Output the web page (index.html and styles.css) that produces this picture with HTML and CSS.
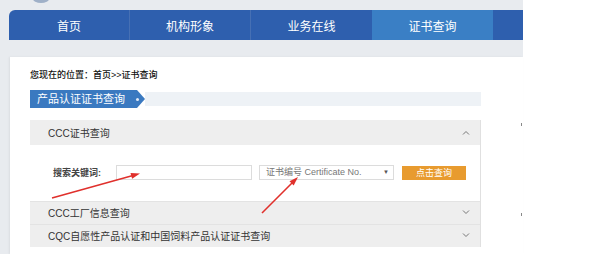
FILE: index.html
```html
<!DOCTYPE html>
<html lang="zh-CN">
<head>
<meta charset="utf-8">
<title>证书查询</title>
<link rel="stylesheet" href="styles.css">
</head>
<body>
<div class="page">
  <div class="top"><span class="logo"></span></div>
  <nav class="nav">
    <a class="nav-item">首页</a>
    <a class="nav-item">机构形象</a>
    <a class="nav-item">业务在线</a>
    <a class="nav-item active">证书查询</a>
    <span class="nav-rest"></span>
  </nav>
  <main class="panel">
    <div class="crumb">您现在的位置：首页&gt;&gt;证书查询</div>
    <div class="title-row">
      <div class="tag">产品认证证书查询<span class="dot"></span></div>
      <div class="title-bar"></div>
    </div>
    <div class="acc">
      <div class="acc-head">
        <span>CCC证书查询</span>
        <svg class="chev" width="8" height="5" viewBox="0 0 8 5"><polyline points="1,4.5 4,1.5 7,4.5" fill="none" stroke="#777" stroke-width="1"/></svg>
      </div>
      <div class="acc-body">
        <span class="label">搜索关键词:</span>
        <span class="input"></span>
        <span class="select">证书编号 Certificate No.<span class="caret">▼</span></span>
        <span class="btn">点击查询</span>
      </div>
      <div class="acc-head">
        <span>CCC工厂信息查询</span>
        <svg class="chev" width="8" height="5" viewBox="0 0 8 5"><polyline points="1,0.5 4,3.5 7,0.5" fill="none" stroke="#777" stroke-width="1"/></svg>
      </div>
      <div class="acc-head">
        <span>CQC自愿性产品认证和中国饲料产品认证证书查询</span>
        <svg class="chev" width="8" height="5" viewBox="0 0 8 5"><polyline points="1,0.5 4,3.5 7,0.5" fill="none" stroke="#777" stroke-width="1"/></svg>
      </div>
    </div>
  </main>
  <span class="mark mark-a"></span>
  <span class="mark mark-b"></span>
</div>
<svg class="arrows" width="600" height="254" viewBox="0 0 600 254">
  <line x1="52" y1="198" x2="132" y2="175.8" stroke="#e0302c" stroke-width="1.6"/>
  <polygon points="140,173.5 132.1,178.8 130.5,173.0" fill="#e0302c"/>
  <line x1="262" y1="213" x2="292" y2="183" stroke="#e0302c" stroke-width="1.6"/>
  <polygon points="298,177 293.7,185.5 289.5,181.3" fill="#e0302c"/>
</svg>
</body>
</html>
```

FILE: styles.css
```css
html, body {
  margin: 0;
  padding: 0;
  background: #ffffff;
}
body {
  position: relative;
  width: 600px;
  height: 254px;
  overflow: hidden;
  font-family: "Liberation Sans", "Noto Sans CJK SC", sans-serif;
}
.page {
  position: relative;
  width: 523px;
  height: 254px;
  background: #e8ebef;
}
.top {
  height: 10px;
  position: relative;
}
.logo {
  position: absolute;
  left: 33px;
  top: -5px;
  width: 16px;
  height: 8px;
  border-radius: 50%;
  background: #9fb0c8;
}
.nav {
  display: flex;
  margin-left: 9px;
  height: 30px;
  background: #2e5fae;
  border-top-left-radius: 6px;
}
.nav-item {
  width: 121px;
  flex: none;
  display: flex;
  align-items: center;
  justify-content: center;
  color: #ffffff;
  font-size: 12px;
  border-right: 1px solid #4670b4;
  box-sizing: border-box;
}
.nav-item:nth-child(3) {
  border-right: none;
}
.nav-item.active {
  background: #3a7fc5;
  border-right: none;
}
.nav-rest {
  flex: 1;
}
.panel {
  margin: 17px 0 0 10px;
  background: #ffffff;
  height: 197px;
  box-sizing: border-box;
  padding: 13px 42px 0 20px;
  box-shadow: -1px 0 2px rgba(0,0,0,0.06);
}
.crumb {
  font-size: 9px;
  line-height: 11px;
  color: #111;
  font-weight: 500;
}
.title-row {
  display: flex;
  align-items: center;
  margin-top: 9px;
  height: 18px;
}
.tag {
  position: relative;
  width: 115px;
  height: 18px;
  flex: none;
  background: #3a79c0;
  color: #ffffff;
  font-size: 11px;
  line-height: 18px;
  padding-left: 7px;
  box-sizing: border-box;
  clip-path: polygon(0 0, 107px 0, 115px 50%, 107px 100%, 0 100%);
}
.dot {
  position: absolute;
  left: 106px;
  top: 8px;
  width: 3px;
  height: 3px;
  border-radius: 50%;
  background: #dfe9f5;
}
.title-bar {
  flex: 1;
  height: 14px;
  background: #eef2f6;
}
.acc {
  margin-top: 12px;
  border-right: 1px solid #e0e0e0;
}
.acc-head {
  display: flex;
  align-items: center;
  justify-content: space-between;
  height: 23px;
  padding: 0 10px 1px 18px;
  box-sizing: border-box;
  background: #eeeeee;
  color: #333;
  font-size: 10px;
  border-top: 1px solid #e3e3e3;
}
.acc-head:first-child {
  height: 25px;
  border-top: none;
}
.acc-body {
  display: flex;
  align-items: center;
  height: 56px;
  padding: 0 0 1px 23px;
  box-sizing: border-box;
  background: #ffffff;
}
.label {
  width: 63px;
  flex: none;
  font-size: 9px;
  font-weight: bold;
  color: #444;
}
.input {
  width: 136px;
  height: 15px;
  border: 1px solid #dcdcdc;
  box-sizing: border-box;
  flex: none;
}
.select {
  position: relative;
  margin-left: 7px;
  width: 135px;
  height: 15px;
  border: 1px solid #dcdcdc;
  box-sizing: border-box;
  flex: none;
  font-size: 9px;
  line-height: 13px;
  color: #777;
  padding-left: 6px;
}
.caret {
  position: absolute;
  right: 4px;
  top: 0;
  font-size: 6px;
  color: #555;
}
.btn {
  margin-left: 8px;
  width: 64px;
  height: 14px;
  flex: none;
  background: #e89b2f;
  color: #ffffff;
  font-size: 9px;
  line-height: 14px;
  text-align: center;
}
.mark {
  position: absolute;
  left: 521px;
  width: 1px;
  height: 3px;
  background: #888;
}
.mark-a { top: 123px; }
.mark-b { top: 213px; }
.arrows {
  position: absolute;
  left: 0;
  top: 0;
  pointer-events: none;
}
```
